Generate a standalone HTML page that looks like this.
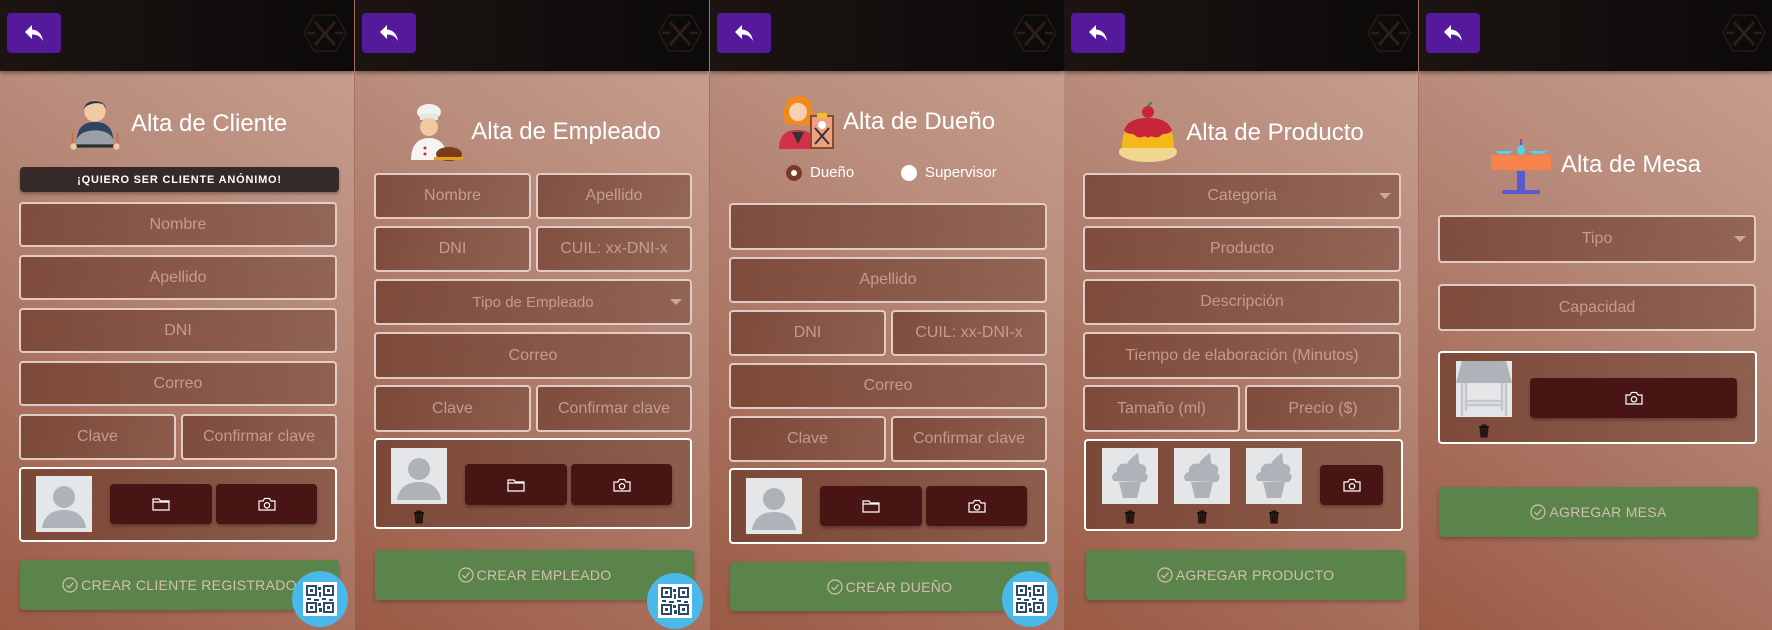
<!DOCTYPE html>
<html><head><meta charset="utf-8">
<style>
*{box-sizing:border-box;margin:0;padding:0}
body{width:1772px;height:630px;overflow:hidden;background:#a87060;font-family:"Liberation Sans",sans-serif}
.p{position:absolute;top:0;width:354px;height:630px;overflow:hidden;background:linear-gradient(215deg,#c9a293 0%,#b98c7c 35%,#ab7563 65%,#9b5a44 100%)}
.hdr{position:absolute;left:0;top:0;width:100%;height:71px;background:linear-gradient(90deg,#1c1412,#0c0a0a);box-shadow:0 2px 4px rgba(0,0,0,.4)}
.back{position:absolute;left:7px;top:13px;width:54px;height:40px;background:#55199c;border-radius:4px}
.back svg{position:absolute;left:17px;top:11px}
.logo{position:absolute;left:303px;top:14px}
.f{position:absolute;border:2px solid rgba(240,226,220,.85);border-radius:4px;background:linear-gradient(120deg,rgba(110,60,45,.75),rgba(120,75,60,.6));color:rgba(225,195,185,.65);font-size:16px;display:flex;align-items:center;justify-content:center}
.box{position:absolute;border:2px solid #fff;border-radius:4px;background:linear-gradient(120deg,rgba(110,60,45,.75),rgba(120,75,60,.6))}
.dd::after{content:"";position:absolute;right:8px;top:50%;margin-top:-3px;border:6px solid transparent;border-top:6px solid rgba(225,195,185,.7);border-bottom:0}
.db{position:absolute;background:#481414;border-radius:4px;box-shadow:0 2px 3px rgba(0,0,0,.3);display:flex;align-items:center;justify-content:center}
.gb{position:absolute;left:20px;width:319px;background:#5b844b;border-radius:4px;box-shadow:0 2px 4px rgba(0,0,0,.25);color:#d4bfae;font-size:14px;letter-spacing:.3px;display:flex;align-items:center;justify-content:center;gap:3px}
.ttl{position:absolute;left:0;width:354px;display:flex;align-items:center;justify-content:center;gap:8px;color:#fff;font-size:24px}
.qr{position:absolute;left:292px;width:56px;height:56px;border-radius:50%;background:#4ab8e8;display:flex;align-items:center;justify-content:center}
.qr div{width:34px;height:34px;background:#fff;padding:2px}
.av{position:absolute;width:56px;height:56px;background:#e4e6e8;overflow:hidden}
.anon{position:absolute;left:20px;top:167px;width:319px;height:25px;background:#352a27;border-radius:4px;color:#fff;font-size:11px;font-weight:bold;letter-spacing:.8px;display:flex;align-items:center;justify-content:center;box-shadow:0 2px 3px rgba(0,0,0,.3)}
.tr{position:absolute}
</style></head><body>

<svg width="0" height="0" style="position:absolute">
<defs>
<symbol id="arr" viewBox="0 0 20 18"><path d="M8 1 L1 8 L8 15 L8 10.5 C13 10.5 16 12 19 17 C18 10 14 6 8 5.5 Z" fill="#fff"/></symbol>
<symbol id="lg" viewBox="0 0 44 38"><path d="M11 1 H33 L43 19 L33 37 H11 L1 19 Z" fill="none" stroke="#2e1d19" stroke-width="1.2"/><path d="M12 8 L32 31 M32 8 L12 31" stroke="#2e1d19" stroke-width="3"/><path d="M4 19 H12 M32 19 H40" stroke="#2e1d19" stroke-width="2.5"/></symbol>
<symbol id="fol" viewBox="0 0 18 14"><path d="M1 2 H7 L8.5 4 H17 V13 H1 Z M1 5 H17" fill="none" stroke="#fff" stroke-width="1.2"/></symbol>
<symbol id="cam" viewBox="0 0 18 14"><path d="M1 4 H5 L6.5 1.5 H11.5 L13 4 H17 V13 H1 Z" fill="none" stroke="#fff" stroke-width="1.2"/><circle cx="9" cy="8.3" r="2.7" fill="none" stroke="#fff" stroke-width="1.2"/></symbol>
<symbol id="per" viewBox="0 0 56 56"><circle cx="28" cy="21" r="11" fill="#adb3b8"/><path d="M6 52 C8 38 18 34 28 34 C38 34 48 38 50 52 Z" fill="#adb3b8"/></symbol>
<symbol id="cup" viewBox="0 0 56 56"><path d="M17 34 L21 50 H35 L39 34 Z" fill="#adb3b8"/><path d="M12 33 C8 30 11 24 15 24 C14 18 20 14 25 16 C27 11 32 8 36 5 C37 10 36 13 38 16 C44 16 46 22 43 25 C47 27 46 33 42 34 Z" fill="#adb3b8"/></symbol>
<symbol id="tab" viewBox="0 0 56 56"><path d="M6 0 H50 L56 22 H0 Z" fill="#adb3b8"/><path d="M6 22 V55 M50 22 V55 M10 22 V50 M46 22 V50 M10 40 H46 M10 44 H46" stroke="#c4c8cb" stroke-width="2.5"/></symbol>
<symbol id="trs" viewBox="0 0 12 14"><path d="M1 2.5 H11 M4 2.5 V1 H8 V2.5 M2 3.5 L3 13 H9 L10 3.5 Z" fill="#3b1c14" stroke="#111" stroke-width="1"/><path d="M4.5 5 V11.5 M6 5 V11.5 M7.5 5 V11.5" stroke="#111" stroke-width=".8"/></symbol>
<symbol id="chk" viewBox="0 0 16 16"><circle cx="8" cy="8" r="7" fill="none" stroke="#d4bfae" stroke-width="1.2"/><path d="M4.5 8.2 L7 10.7 L11.5 5.5" fill="none" stroke="#d4bfae" stroke-width="1.2"/></symbol>
<symbol id="qrc" viewBox="0 0 30 30"><g fill="none" stroke="#2a4a6a" stroke-width="2"><rect x="2" y="2" width="9" height="9"/><rect x="19" y="2" width="9" height="9"/><rect x="2" y="19" width="9" height="9"/><rect x="19" y="19" width="9" height="9"/></g><g fill="#2a4a6a"><rect x="5" y="5" width="3" height="3"/><rect x="22" y="5" width="3" height="3"/><rect x="5" y="22" width="3" height="3"/><rect x="22" y="22" width="3" height="3"/><rect x="13" y="3" width="3" height="3"/><rect x="14" y="8" width="2" height="5"/><rect x="2" y="14" width="4" height="2"/><rect x="9" y="15" width="5" height="2"/><rect x="17" y="14" width="4" height="2"/><rect x="24" y="15" width="4" height="2"/><rect x="13" y="19" width="3" height="3"/><rect x="14" y="24" width="3" height="4"/></g></symbol>
</defs></svg>

<!-- PANEL 1 -->
<div class="p" style="left:0">
<div class="hdr"><div class="back"><svg width="20" height="18"><use href="#arr"/></svg></div><svg class="logo" width="44" height="38"><use href="#lg"/></svg></div>
<div class="ttl" style="top:96px;height:56px">
<svg width="56" height="60" viewBox="0 0 50 56"><circle cx="25" cy="16" r="10" fill="#f2c9a0"/><path d="M15 14 C15 4 35 4 35 14 L33 10 C28 7 20 9 16 12 Z" fill="#273954"/><path d="M8 44 C8 30 16 26 25 26 C34 26 42 30 42 44 Z" fill="#2f4460"/><path d="M7 48 C7 38 15 34 25 34 C35 34 43 38 43 48 Z" fill="#9aa0a6"/><rect x="5" y="47" width="40" height="3" rx="1.5" fill="#2b2f35"/><circle cx="5" cy="49" r="3" fill="#f2c9a0"/><circle cx="45" cy="49" r="3" fill="#f2c9a0"/><path d="M4 36 V46 M46 36 V46" stroke="#e0604a" stroke-width="1.5"/></svg>
<span>Alta de Cliente</span></div>
<div class="anon">¡QUIERO SER CLIENTE ANÓNIMO!</div>
<div class="f" style="left:19px;top:202px;width:318px;height:45px">Nombre</div>
<div class="f" style="left:19px;top:255px;width:318px;height:45px">Apellido</div>
<div class="f" style="left:19px;top:308px;width:318px;height:45px">DNI</div>
<div class="f" style="left:19px;top:361px;width:318px;height:45px">Correo</div>
<div class="f" style="left:19px;top:414px;width:157px;height:46px">Clave</div>
<div class="f" style="left:181px;top:414px;width:156px;height:46px">Confirmar clave</div>
<div class="box" style="left:19px;top:467px;width:318px;height:75px"></div>
<svg class="av" style="left:36px;top:476px"><use href="#per"/></svg>
<div class="db" style="left:110px;top:484px;width:102px;height:40px"><svg width="18" height="14"><use href="#fol"/></svg></div>
<div class="db" style="left:216px;top:484px;width:101px;height:40px"><svg width="18" height="14"><use href="#cam"/></svg></div>
<div class="gb" style="top:560px;height:50px"><svg width="16" height="16"><use href="#chk"/></svg>CREAR CLIENTE REGISTRADO</div>
<div class="qr" style="top:571px"><div><svg width="30" height="30"><use href="#qrc"/></svg></div></div>
</div>

<!-- PANEL 2 -->
<div class="p" style="left:355px">
<div class="hdr"><div class="back"><svg width="20" height="18"><use href="#arr"/></svg></div><svg class="logo" width="44" height="38"><use href="#lg"/></svg></div>
<div class="ttl" style="top:102px;height:60px">
<svg width="60" height="60" viewBox="0 0 60 60"><ellipse cx="26" cy="10" rx="12" ry="8" fill="#f1f1f1"/><rect x="17" y="12" width="18" height="6" fill="#e6e6e6"/><circle cx="26" cy="25" r="9" fill="#f2c9a0"/><path d="M8 58 C8 42 16 36 26 36 C36 36 44 42 44 58 Z" fill="#f4f4f4"/><circle cx="22" cy="46" r="1.5" fill="#c33"/><circle cx="22" cy="52" r="1.5" fill="#c33"/><ellipse cx="46" cy="52" rx="13" ry="7" fill="#7a3d1c"/><rect x="31" y="55" width="30" height="3" fill="#e0a020"/></svg>
<span>Alta de Empleado</span></div>
<div class="f" style="left:19px;top:173px;width:157px;height:46px">Nombre</div>
<div class="f" style="left:181px;top:173px;width:156px;height:46px">Apellido</div>
<div class="f" style="left:19px;top:226px;width:157px;height:46px">DNI</div>
<div class="f" style="left:181px;top:226px;width:156px;height:46px">CUIL: xx-DNI-x</div>
<div class="f dd" style="left:19px;top:279px;width:318px;height:46px;font-size:15px">Tipo de Empleado</div>
<div class="f" style="left:19px;top:332px;width:318px;height:47px">Correo</div>
<div class="f" style="left:19px;top:385px;width:157px;height:47px">Clave</div>
<div class="f" style="left:181px;top:385px;width:156px;height:47px">Confirmar clave</div>
<div class="box" style="left:19px;top:438px;width:318px;height:91px"></div>
<svg class="av" style="left:36px;top:448px"><use href="#per"/></svg>
<svg class="tr" style="left:58px;top:510px" width="12" height="14"><use href="#trs"/></svg>
<div class="db" style="left:110px;top:464px;width:102px;height:41px"><svg width="18" height="14"><use href="#fol"/></svg></div>
<div class="db" style="left:216px;top:464px;width:101px;height:41px"><svg width="18" height="14"><use href="#cam"/></svg></div>
<div class="gb" style="top:550px;height:50px"><svg width="16" height="16"><use href="#chk"/></svg>CREAR EMPLEADO</div>
<div class="qr" style="top:573px"><div><svg width="30" height="30"><use href="#qrc"/></svg></div></div>
</div>

<!-- PANEL 3 -->
<div class="p" style="left:710px">
<div class="hdr"><div class="back"><svg width="20" height="18"><use href="#arr"/></svg></div><svg class="logo" width="44" height="38"><use href="#lg"/></svg></div>
<div class="ttl" style="top:93px;height:58px">
<svg width="56" height="56" viewBox="0 0 56 56"><path d="M6 30 C2 10 10 2 20 2 C32 2 36 12 32 32 Z" fill="#f08a1c"/><circle cx="19" cy="18" r="9" fill="#f6d0b0"/><path d="M0 55 C0 40 8 36 19 36 C30 36 36 40 36 55 Z" fill="#d3304a"/><path d="M13 38 L19 50 L25 38 Z" fill="#333"/><rect x="32" y="22" width="22" height="32" fill="#f0a080" stroke="#8a4a30" stroke-width="2"/><rect x="38" y="19" width="10" height="5" fill="#f0c020"/><path d="M36 34 L50 50 M50 34 L36 50" stroke="#333" stroke-width="2"/><circle cx="43" cy="31" r="4" fill="#fff"/></svg>
<span>Alta de Dueño</span></div>
<div style="position:absolute;top:164px;left:76px;display:flex;align-items:center;gap:8px;color:#fff;font-size:15px"><span style="width:16px;height:16px;border-radius:50%;background:#fff;border:5px solid #7a3a28"></span>Dueño</div>
<div style="position:absolute;top:164px;left:191px;display:flex;align-items:center;gap:8px;color:#fff;font-size:15px"><span style="width:16px;height:16px;border-radius:50%;background:#fff"></span>Supervisor</div>
<div class="f" style="left:19px;top:203px;width:318px;height:47px"></div>
<div class="f" style="left:19px;top:257px;width:318px;height:46px">Apellido</div>
<div class="f" style="left:19px;top:310px;width:157px;height:46px">DNI</div>
<div class="f" style="left:181px;top:310px;width:156px;height:46px">CUIL: xx-DNI-x</div>
<div class="f" style="left:19px;top:363px;width:318px;height:46px">Correo</div>
<div class="f" style="left:19px;top:416px;width:157px;height:46px">Clave</div>
<div class="f" style="left:181px;top:416px;width:156px;height:46px">Confirmar clave</div>
<div class="box" style="left:19px;top:468px;width:318px;height:76px"></div>
<svg class="av" style="left:36px;top:478px"><use href="#per"/></svg>
<div class="db" style="left:110px;top:486px;width:102px;height:40px"><svg width="18" height="14"><use href="#fol"/></svg></div>
<div class="db" style="left:216px;top:486px;width:101px;height:40px"><svg width="18" height="14"><use href="#cam"/></svg></div>
<div class="gb" style="top:562px;height:49px"><svg width="16" height="16"><use href="#chk"/></svg>CREAR DUEÑO</div>
<div class="qr" style="top:571px"><div><svg width="30" height="30"><use href="#qrc"/></svg></div></div>
</div>

<!-- PANEL 4 -->
<div class="p" style="left:1064px">
<div class="hdr"><div class="back"><svg width="20" height="18"><use href="#arr"/></svg></div><svg class="logo" width="44" height="38"><use href="#lg"/></svg></div>
<div class="ttl" style="top:102px;height:62px">
<svg width="60" height="62" viewBox="0 0 60 62"><ellipse cx="30" cy="50" rx="29" ry="10" fill="#f2d690"/><path d="M4 46 C4 26 12 16 30 16 C48 16 56 26 56 46 Z" fill="#f5b81c"/><path d="M6 28 C10 18 20 16 30 16 C40 16 50 18 54 28 C50 34 46 30 42 34 C38 38 34 32 30 36 C26 32 22 38 18 34 C14 30 10 34 6 28 Z" fill="#c8243a"/><circle cx="30" cy="10" r="6" fill="#c8243a"/><path d="M30 4 L34 0" stroke="#3a8a30" stroke-width="2"/></svg>
<span>Alta de Producto</span></div>
<div class="f dd" style="left:19px;top:173px;width:318px;height:46px">Categoria</div>
<div class="f" style="left:19px;top:226px;width:318px;height:46px">Producto</div>
<div class="f" style="left:19px;top:279px;width:318px;height:46px">Descripción</div>
<div class="f" style="left:19px;top:332px;width:318px;height:47px">Tiempo de elaboración (Minutos)</div>
<div class="f" style="left:19px;top:385px;width:157px;height:47px">Tamaño (ml)</div>
<div class="f" style="left:181px;top:385px;width:156px;height:47px">Precio ($)</div>
<div class="box" style="left:20px;top:439px;width:319px;height:92px"></div>
<svg class="av" style="left:38px;top:448px"><use href="#cup"/></svg>
<svg class="av" style="left:110px;top:448px"><use href="#cup"/></svg>
<svg class="av" style="left:182px;top:448px"><use href="#cup"/></svg>
<svg class="tr" style="left:60px;top:510px" width="12" height="14"><use href="#trs"/></svg>
<svg class="tr" style="left:132px;top:510px" width="12" height="14"><use href="#trs"/></svg>
<svg class="tr" style="left:204px;top:510px" width="12" height="14"><use href="#trs"/></svg>
<div class="db" style="left:256px;top:465px;width:63px;height:40px"><svg width="18" height="14"><use href="#cam"/></svg></div>
<div class="gb" style="left:22px;top:550px;height:50px"><svg width="16" height="16"><use href="#chk"/></svg>AGREGAR PRODUCTO</div>
</div>

<!-- PANEL 5 -->
<div class="p" style="left:1419px;width:353px">
<div class="hdr"><div class="back"><svg width="20" height="18"><use href="#arr"/></svg></div><svg class="logo" width="44" height="38"><use href="#lg"/></svg></div>
<div class="ttl" style="top:135px;height:60px">
<svg width="62" height="60" viewBox="0 0 62 60"><circle cx="30" cy="2" r="2" fill="#f08040"/><path d="M30 4 V10" stroke="#5a5ad0" stroke-width="2"/><ellipse cx="30" cy="15" rx="4" ry="5" fill="#5ad0e8"/><path d="M4 16 H22 L18 19 H8 Z M38 16 H56 L52 19 H42 Z" fill="#5ad0e8"/><path d="M0 20 H60 V34 C57 37 55 33 52 36 C49 33 47 37 44 34 C41 37 39 33 36 36 C33 33 31 37 28 34 C25 37 23 33 20 36 C17 33 15 37 12 34 C9 37 7 33 4 36 L0 34 Z" fill="#f6834a"/><rect x="26" y="36" width="8" height="20" fill="#5a5ad0"/><rect x="11" y="55" width="38" height="4" rx="2" fill="#5a5ad0"/></svg>
<span>Alta de Mesa</span></div>
<div class="f dd" style="left:19px;top:215px;width:318px;height:48px">Tipo</div>
<div class="f" style="left:19px;top:284px;width:318px;height:47px">Capacidad</div>
<div class="box" style="left:19px;top:351px;width:319px;height:93px"></div>
<svg class="av" style="left:37px;top:361px"><use href="#tab"/></svg>
<svg class="tr" style="left:59px;top:424px" width="12" height="14"><use href="#trs"/></svg>
<div class="db" style="left:111px;top:378px;width:207px;height:40px"><svg width="18" height="14"><use href="#cam"/></svg></div>
<div class="gb" style="top:487px;height:50px"><svg width="16" height="16"><use href="#chk"/></svg>AGREGAR MESA</div>
</div>

</body></html>
